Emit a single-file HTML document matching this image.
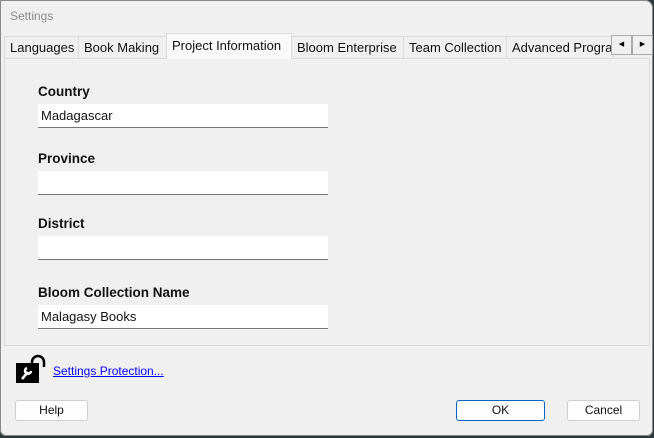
<!DOCTYPE html><html><head><style>
body{margin:0;width:654px;height:438px;background:#2a3a3c;position:relative;overflow:hidden;font-family:"Liberation Sans",sans-serif}
.win{position:absolute;left:0;top:0;width:653px;height:436px;background:#f0f0f0;border-radius:0 8px 6px 6px;box-shadow:inset 0 0 0 1px #888}
.title{position:absolute;left:10px;top:9px;font-size:12px;color:#8a8a8a}
.tab{position:absolute;top:36px;height:22px;background:#f0f0f0;border:1px solid #dadada;border-bottom:none;box-sizing:border-box;font-size:13px;color:#111;padding:3px 0 0 5px;white-space:nowrap;overflow:hidden}
.tab.sel{top:33px;height:26px;background:#f9f9f9;z-index:2;padding-top:4px}
.panel{position:absolute;left:4px;top:58px;width:646px;height:288px;background:#f0f0f0;border:1px solid #dadada;box-sizing:border-box}
.lbl{position:absolute;left:38px;font-size:13.5px;font-weight:bold;color:#111}
.inp{position:absolute;left:38px;width:290px;height:24px;background:#fff;border-bottom:1px solid #777;box-sizing:border-box;font-size:13px;padding:4px 0 0 3px;color:#111}
.btn{position:absolute;top:400px;height:21px;background:#fdfdfd;border:1px solid #cfcfcf;border-radius:3px;box-sizing:border-box;font-size:12px;text-align:center;line-height:19px;color:#111}
.arr{position:absolute;top:35px;width:21px;height:20px;background:#f0f0f0;border:1px solid #aaa;box-sizing:border-box;font-size:7px;text-align:center;line-height:18px}
</style></head><body><div class="win">
<div class="title">Settings</div>
<div class="tab" style="left:4px;width:75px">Languages</div>
<div class="tab" style="left:78px;width:89px">Book Making</div>
<div class="tab sel" style="left:166px;width:126px">Project Information</div>
<div class="tab" style="left:291px;width:113px">Bloom Enterprise</div>
<div class="tab" style="left:403px;width:104px">Team Collection</div>
<div class="tab" style="left:506px;width:108px">Advanced Programs</div>
<div class="arr" style="left:611px">◀</div><div class="arr" style="left:632px">▶</div>
<div class="panel"></div>
<div class="lbl" style="top:84px">Country</div><div class="inp" style="top:104px">Madagascar</div>
<div class="lbl" style="top:151px">Province</div><div class="inp" style="top:171px"></div>
<div class="lbl" style="top:216px">District</div><div class="inp" style="top:236px"></div>
<div class="lbl" style="top:285px">Bloom Collection Name</div><div class="inp" style="top:305px">Malagasy Books</div>
<svg style="position:absolute;left:14px;top:354px" width="34" height="31"><path d="M18 12 V8 a6 6 0 0 1 12 0 V13" fill="none" stroke="#000" stroke-width="2.5"/><rect x="2" y="9" width="23" height="20" fill="#000"/><path d="M8 25 L14 18 M13 14 a3 3 0 1 0 4 3" stroke="#fff" stroke-width="2.5" fill="none"/></svg>
<div style="position:absolute;left:53px;top:364px;font-size:12px;color:#00f;text-decoration:underline">Settings Protection...</div>
<div class="btn" style="left:15px;width:73px">Help</div>
<div class="btn" style="left:456px;width:89px;border:1px solid #0067c0">OK</div>
<div class="btn" style="left:567px;width:73px">Cancel</div>
</div></body></html>
